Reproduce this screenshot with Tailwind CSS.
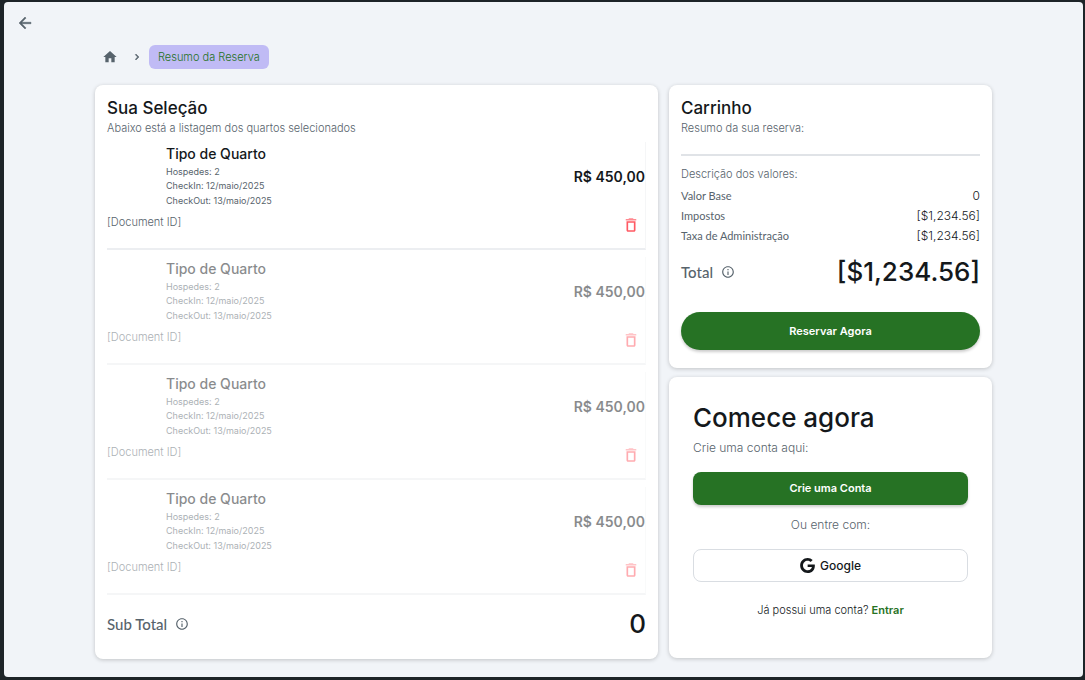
<!DOCTYPE html>
<html lang="pt-BR">
<head>
<meta charset="utf-8">
<meta name="viewport" content="width=device-width, initial-scale=1">
<title>Resumo da Reserva</title>
<script src="https://cdn.jsdelivr.net/npm/@tailwindcss/browser@4"></script>
</head>
<body class="min-h-screen bg-[#1d2428] pt-[2px] pr-[2px] pb-[3px] pl-[4px] font-['Inter',sans-serif] text-[#14181b]">
<svg class="hidden">
  <symbol id="info" viewBox="0 0 24 24"><path fill="currentColor" d="M11 7h2v2h-2zm0 4h2v6h-2zm1-9C6.480 2 2 6.480 2 12s4.480 10 10 10 10-4.480 10-10S17.520 2 12 2m0 18c-4.410 0-8-3.590-8-8s3.590-8 8-8 8 3.590 8 8-3.590 8-8 8"/></symbol>
  <symbol id="trash" viewBox="0 0 24 24"><path fill="currentColor" opacity=".7" d="M15.500 4l-1-1h-5l-1 1H5v2h14V4z"/><path fill="currentColor" fill-rule="evenodd" d="M6 7h12v12c0 1.100-.9 2-2 2H8c-1.100 0-2-.9-2-2zM8.200 9v10h7.600V9z"/></symbol>
</svg>
<div class="min-h-[calc(100vh-5px)] rounded-[4px] bg-[#f1f4f8] px-3 pt-3 pb-[18px]">
  <header>
    <button type="button" aria-label="Voltar" class="block size-[18px] text-[#57636c]">
      <svg viewBox="0 0 24 24" class="size-[18px]"><path fill="currentColor" stroke="currentColor" stroke-width=".6" d="M20 11H7.830l5.590-5.590L12 4l-8 8 8 8 1.410-1.410L7.830 13H20z"/></svg>
    </button>
  </header>
  <div class="mx-auto max-w-[897px]">
    <nav aria-label="Navegação" class="mt-[13px] flex items-center pl-[7px]">
      <a href="#" aria-label="Início" class="text-[#57636c]"><svg viewBox="0 0 24 24" class="size-4"><path fill="currentColor" d="M10 20v-6h4v6h5v-8h3L12 3 2 12h3v8z"/></svg></a>
      <svg viewBox="0 0 24 24" class="ml-[13px] mr-[6px] size-[12px] text-[#57636c]"><path fill="currentColor" stroke="currentColor" d="M10 6 8.590 7.410 13.170 12l-4.580 4.590L10 18l6-6z"/></svg>
      <a href="#" aria-current="page" class="rounded-md bg-[#c0bbf5] px-[9px] py-1 text-[11px] leading-4 font-light text-[#267224]">Resumo da Reserva</a>
    </nav>
    <main class="mt-4 grid grid-cols-[1fr_323px] items-start gap-[11px]">
      <section class="rounded-lg bg-white px-3 pt-[11px] pb-[17px] shadow-[0_1px_4px_rgba(0,0,0,0.2)]">
        <h1 class="text-[17px] leading-6 font-medium">Sua Seleção</h1>
        <p class="text-[11px] leading-4 font-light text-[#57636c]">Abaixo está a listagem dos quartos selecionados</p>
        <ul id="rooms" class="mt-[6px] flex flex-col gap-[7px]">
          <li class="border-r border-b-2 border-r-[#f5f6f7] border-b-[#eceef1]">
            <div class="flex h-[68px] items-center justify-between pl-[59px]">
              <div>
                <h2 class="text-[14px] leading-[22px] font-medium">Tipo de Quarto</h2>
                <p class="text-[9px] leading-[14px] text-[#57636c]">Hospedes: 2</p>
                <p class="text-[9px] leading-[14px] text-[#57636c]">CheckIn: 12/maio/2025</p>
                <p class="text-[9px] leading-4 text-[#57636c]">CheckOut: 13/maio/2025</p>
              </div>
              <p class="text-[14px] font-semibold">R$ 450,00</p>
            </div>
            <div class="flex h-[38px] justify-between pt-1 pr-[5px]">
              <p class="text-[11px] leading-4 font-light text-[#57636c]">[Document ID]</p>
              <button type="button" aria-label="Remover quarto" class="mt-[2px] size-[18px] text-[#ff5963]"><svg class="size-[18px]"><use href="#trash"/></svg></button>
            </div>
          </li>
        </ul>
        <div class="mt-[11px] flex items-center justify-between">
          <p class="flex items-center gap-2 font-['Lato',sans-serif] text-[15px] leading-6 font-medium text-[#57636c]">Sub Total <svg class="size-[14px]"><use href="#info"/></svg></p>
          <p class="text-[26px] leading-9 font-medium">0</p>
        </div>
      </section>
      <div class="flex flex-col gap-[9px]">
        <section class="rounded-lg bg-white px-3 pt-[11px] pb-[18px] shadow-[0_1px_4px_rgba(0,0,0,0.2)]">
          <h2 class="text-[17px] leading-6 font-medium">Carrinho</h2>
          <p class="text-[11px] leading-4 font-light text-[#57636c]">Resumo da sua reserva:</p>
          <hr class="mt-[18px] border-t-2 border-[#e0e3e7]">
          <h3 class="mt-[10px] text-[11px] leading-4 font-light text-[#57636c]">Descrição dos valores:</h3>
          <dl class="mt-1 font-['Lato',sans-serif] text-[11px] text-[#57636c]">
            <div class="flex h-5 items-center justify-between"><dt>Valor Base</dt><dd class="font-['Inter',sans-serif] text-[12px] font-light text-[#14181b]">0</dd></div>
            <div class="flex h-5 items-center justify-between"><dt>Impostos</dt><dd class="font-['Inter',sans-serif] text-[12px] font-light text-[#14181b]">[$1,234.56]</dd></div>
            <div class="flex h-5 items-center justify-between"><dt>Taxa de Administração</dt><dd class="font-['Inter',sans-serif] text-[12px] font-light text-[#14181b]">[$1,234.56]</dd></div>
          </dl>
          <div class="mt-2 flex items-center justify-between">
            <p class="flex items-center gap-2 font-['Lato',sans-serif] text-[15px] leading-6 font-medium text-[#57636c]">Total <svg class="size-[14px]"><use href="#info"/></svg></p>
            <p class="text-[26px] leading-9 font-medium">[$1,234.56]</p>
          </div>
          <button type="button" class="mt-[22px] block h-[38px] w-full rounded-full bg-[#267224] text-[11px] font-semibold text-white shadow-[0_2px_3px_rgba(0,0,0,0.2)]">Reservar Agora</button>
        </section>
        <section class="rounded-lg bg-white px-6 pt-[23px] pb-10 shadow-[0_1px_4px_rgba(0,0,0,0.2)]">
          <h2 class="text-[26px] leading-9 font-medium">Comece agora</h2>
          <p class="mt-[3px] text-[12px] leading-[18px] font-light text-[#57636c]">Crie uma conta aqui:</p>
          <button type="button" class="mt-[15px] block h-[33px] w-full rounded-lg bg-[#267224] text-[11px] font-semibold text-white shadow-[0_2px_3px_rgba(0,0,0,0.2)]">Crie uma Conta</button>
          <p class="mt-[11px] text-center text-[12px] leading-[18px] font-light text-[#57636c]">Ou entre com:</p>
          <button type="button" class="mt-[15px] flex h-[33px] w-full items-center justify-center gap-[5px] rounded-lg border border-[#d9dde2] text-[12px] font-medium"><svg viewBox="0 0 24 24" class="size-[15px]"><path fill="currentColor" d="M12.240 10.285V14.400h6.806c-.275 1.765-2.056 5.174-6.806 5.174-4.095 0-7.439-3.389-7.439-7.574s3.345-7.574 7.439-7.574c2.330 0 3.891.989 4.785 1.849l3.254-3.138C18.189 1.186 15.479 0 12.240 0c-6.635 0-12 5.365-12 12s5.365 12 12 12c6.926 0 11.520-4.869 11.520-11.726 0-.788-.085-1.390-.189-1.989z"/></svg>Google</button>
          <p class="mt-5 text-center text-[11px] leading-4 font-light">Já possui uma conta? <a href="#" class="font-semibold text-[#267224]">Entrar</a></p>
        </section>
      </div>
    </main>
  </div>
</div>
<script>
  const list = document.getElementById('rooms');
  const first = list.firstElementChild;
  for (let i = 0; i < 3; i++) {
    const room = first.cloneNode(true);
    room.classList.add('opacity-50');
    list.append(room);
  }
</script>
</body>
</html>
